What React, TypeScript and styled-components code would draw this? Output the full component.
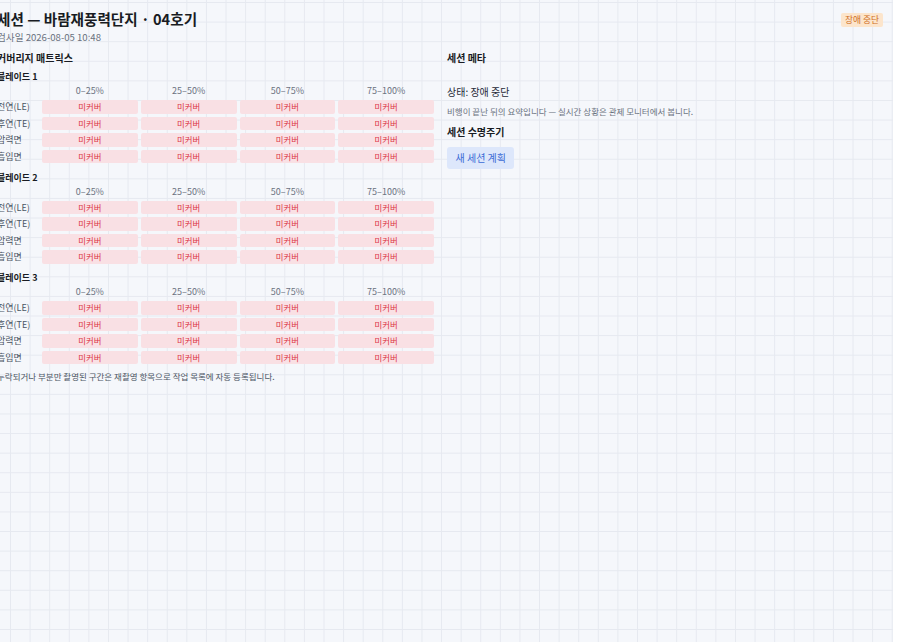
import React from "react";
import styled, { createGlobalStyle } from "styled-components";

const GlobalStyle = createGlobalStyle`
  html, body { margin: 0; padding: 0; background: #ffffff; }
  body { font-family: "Noto Sans CJK KR", "Noto Sans", sans-serif; }
  * { box-sizing: border-box; }
`;

const Page = styled.div`
  width: 893px;
  min-height: 642px;
  overflow: hidden;
  background-color: #f5f7fb;
  background-image:
    linear-gradient(to right, #e6e9f0 1px, transparent 1px),
    linear-gradient(to bottom, #e6e9f0 1px, transparent 1px);
  background-size: 19.6px 19.6px;
  background-position: 10px 2px;
`;

const Content = styled.div`
  margin-left: -3px;
  padding: 9px 10px 0 0;
`;

const Header = styled.header`
  display: flex;
  justify-content: space-between;
  align-items: flex-start;
`;

const TitleBlock = styled.div`
  display: flex;
  flex-direction: column;
  gap: 1px;
`;

const Title = styled.h1`
  margin: 0;
  font-size: 14.6px;
  line-height: 20px;
  font-weight: 700;
  color: #181b22;
`;

const Sub = styled.div`
  font-size: 9.6px;
  line-height: 14px;
  color: #6b7280;
`;

const Badge = styled.span`
  margin-top: 4px;
  padding: 0 4px;
  font-size: 8.7px;
  line-height: 13.5px;
  border-radius: 2px;
  background: #fce5cc;
  color: #cf6d22;
`;

const Columns = styled.div`
  display: grid;
  grid-template-columns: 438px 1fr;
  column-gap: 12px;
  margin-top: 6px;
`;

const Section = styled.section`
  display: flex;
  flex-direction: column;
`;

const Heading = styled.h2`
  margin: 0;
  font-size: 10px;
  line-height: 16px;
  font-weight: 700;
  color: #181b22;
`;

const Blade = styled.div<{ $first?: boolean }>`
  margin-top: ${(p) => (p.$first ? "4px" : "7.5px")};
`;

const BladeLabel = styled.div`
  font-size: 9px;
  line-height: 14px;
  font-weight: 700;
  color: #181b22;
`;

const Matrix = styled.div`
  display: grid;
  grid-template-columns: 42px repeat(4, 95.75px);
  column-gap: 3px;
  row-gap: 3px;
`;

const ColHead = styled.div`
  font-size: 9px;
  line-height: 13px;
  color: #6b7280;
  text-align: center;
`;

const RowLabel = styled.div`
  font-size: 9px;
  line-height: 13.5px;
  color: #4b5563;
  white-space: nowrap;
`;

const Cell = styled.div`
  height: 13.5px;
  border-radius: 2px;
  background: #f9e0e4;
  color: #dc3545;
  font-size: 8.4px;
  line-height: 13.5px;
  text-align: center;
`;

const Note = styled.p`
  margin: 4.5px 0 0;
  font-size: 8.5px;
  line-height: 14px;
  color: #4b5563;
`;

const Status = styled.div`
  margin-top: 19px;
  font-size: 10px;
  line-height: 14px;
  color: #1f2937;
`;

const Desc = styled.p`
  margin: 4.5px 0 0;
  font-size: 8.5px;
  line-height: 14px;
  color: #6b7280;
`;

const SubHeading = styled(Heading)`
  margin-top: 6px;
`;

const Button = styled.button`
  align-self: flex-start;
  margin-top: 7px;
  height: 22px;
  padding: 0 8.5px;
  border: none;
  border-radius: 3px;
  background: #dde7fb;
  color: #3b6bd6;
  font-family: inherit;
  font-size: 10px;
  cursor: pointer;
`;

const cols = ["0–25%", "25–50%", "50–75%", "75–100%"];
const rows = ["전연(LE)", "후연(TE)", "압력면", "흡입면"];
const blades = ["블레이드 1", "블레이드 2", "블레이드 3"];

export default function App() {
  return (
    <>
      <GlobalStyle />
      <Page>
        <Content>
          <Header>
            <TitleBlock>
              <Title>세션 — 바람재풍력단지 · 04호기</Title>
              <Sub>검사일 2026-08-05 10:48</Sub>
            </TitleBlock>
            <Badge>장애 중단</Badge>
          </Header>
          <Columns>
            <Section>
              <Heading>커버리지 매트릭스</Heading>
              {blades.map((b, bi) => (
                <Blade key={b} $first={bi === 0}>
                  <BladeLabel>{b}</BladeLabel>
                  <Matrix>
                    <div />
                    {cols.map((c) => (
                      <ColHead key={c}>{c}</ColHead>
                    ))}
                    {rows.map((r) => (
                      <React.Fragment key={r}>
                        <RowLabel>{r}</RowLabel>
                        {cols.map((c) => (
                          <Cell key={c}>미커버</Cell>
                        ))}
                      </React.Fragment>
                    ))}
                  </Matrix>
                </Blade>
              ))}
              <Note>누락되거나 부분만 촬영된 구간은 재촬영 항목으로 작업 목록에 자동 등록됩니다.</Note>
            </Section>
            <Section>
              <Heading>세션 메타</Heading>
              <Status>상태: 장애 중단</Status>
              <Desc>비행이 끝난 뒤의 요약입니다 — 실시간 상황은 관제 모니터에서 봅니다.</Desc>
              <SubHeading>세션 수명주기</SubHeading>
              <Button>새 세션 계획</Button>
            </Section>
          </Columns>
        </Content>
      </Page>
    </>
  );
}
